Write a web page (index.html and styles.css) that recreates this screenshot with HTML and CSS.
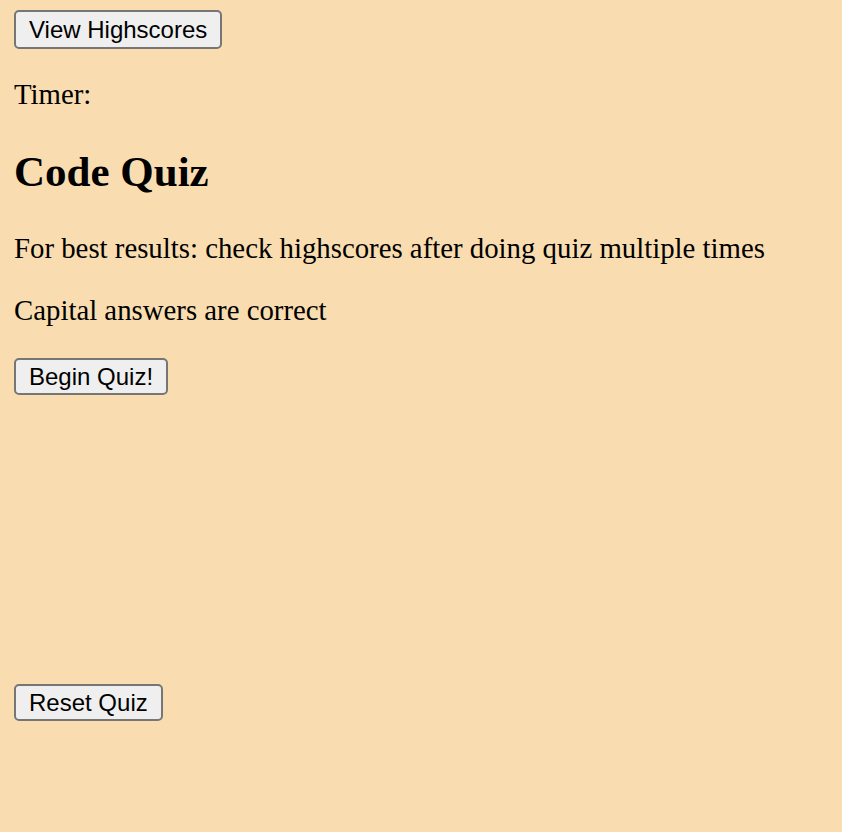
FILE: index.html
```html
<!DOCTYPE html>
<html lang="en">
<head>
<meta charset="utf-8">
<title>Code Quiz</title>
<link rel="stylesheet" href="styles.css">
</head>
<body>
<header class="top">
  <button class="btn btn-scores" type="button">View Highscores</button>
  <p class="timer">Timer:</p>
</header>
<section class="intro">
  <h1 class="title">Code Quiz</h1>
  <p class="note">For best results: check highscores after doing quiz multiple times</p>
  <p class="note">Capital answers are correct</p>
  <button class="btn btn-begin" type="button">Begin Quiz!</button>
</section>
<section class="quiz"></section>
<footer class="bottom">
  <button class="btn btn-reset" type="button">Reset Quiz</button>
</footer>
</body>
</html>
```
FILE: styles.css
```css
html {
  background: #f9ddb0;
}
body {
  margin: 0;
  padding: 10px 14px;
  background: #f9ddb0;
  color: #000;
  font-family: "Liberation Serif", "Times New Roman", serif;
  font-size: 28.8px;
}
.btn {
  display: block;
  box-sizing: border-box;
  height: 37px;
  margin: 0;
  padding: 0 13px;
  font-family: "Liberation Sans", Arial, sans-serif;
  font-size: 24px;
  line-height: 28px;
  color: #000;
  background: #efefef;
  border: 2px solid #767676;
  border-radius: 5px;
}
.btn-scores {
  height: 39px;
}
.timer,
.note {
  margin: 29px 0;
  line-height: 33px;
}
.timer {
  margin-bottom: 0;
}
.title {
  margin: 36px 0;
  font-size: 43px;
  line-height: 49px;
  font-weight: bold;
}
.note:last-of-type {
  margin-bottom: 31px;
}
.quiz {
  height: 289px;
}
.bottom {
  padding-bottom: 20px;
}
```
